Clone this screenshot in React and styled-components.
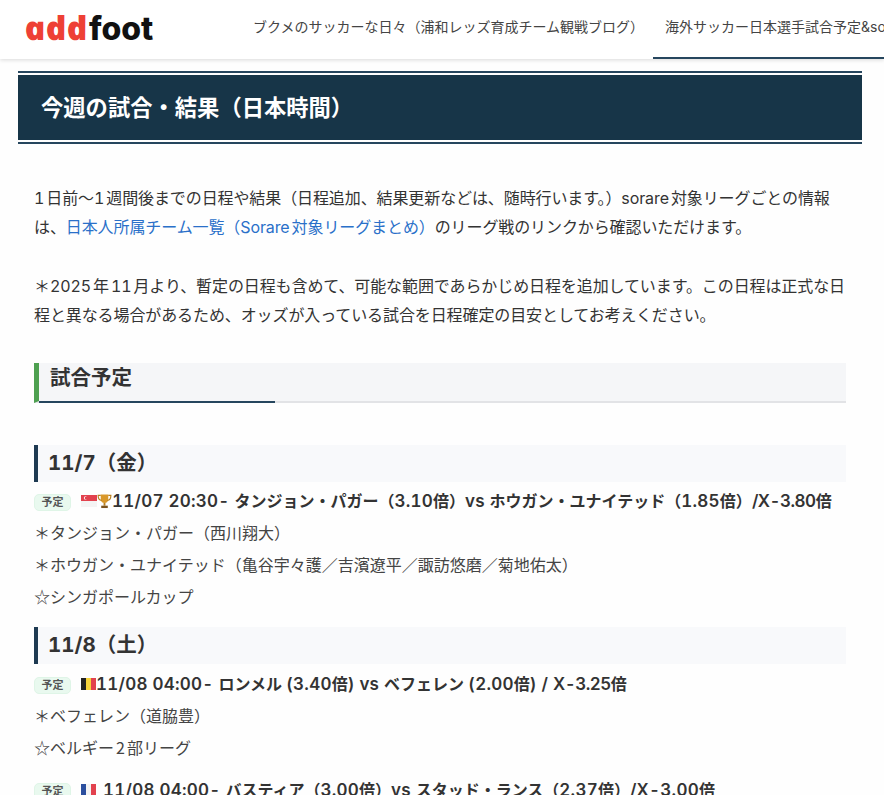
import React from 'react'
import styled, { createGlobalStyle } from 'styled-components'

const GlobalStyle = createGlobalStyle`
  html, body {
    margin: 0;
    padding: 0;
    height: 795px;
    overflow: hidden;
    background: #fefefe;
    color: #333;
    font-family: Inter, "Noto Sans CJK JP", sans-serif;
    font-variant-numeric: tabular-nums;
    text-autospace: normal;
  }
`

const Header = styled.header`
  display: flex;
  height: 59px;
  background: #fff;
  box-shadow: 0 1px 4px rgba(0, 0, 0, 0.15);
  overflow: hidden;
  position: relative;
`
const Logo = styled.div`
  flex: none;
  width: 253px;
  padding: 6px 0 0 24px;
  box-sizing: border-box;
  font-size: 33px;
  line-height: 44px;
  white-space: nowrap;
  color: #111;
`
const LogoRed = styled.span`
  display: inline-block;
  font-family: "Open Sans", sans-serif;
  font-style: italic;
  font-weight: 800;
  color: #ee4035;
  transform-origin: left center;
  transform: skewX(12deg) scaleX(1.05);
  margin-right: 5px;
`
const LogoDark = styled.span`
  font-family: Inter, sans-serif;
  font-weight: 800;
  font-size: 32px;
`
const NavItem = styled.a`
  flex: none;
  height: 59px;
  box-sizing: border-box;
  padding: 17px 0 0 ${props => (props.$active ? '12px' : '0')};
  margin-right: ${props => (props.$active ? '0' : '9px')};
  font-size: 14px;
  line-height: 20px;
  color: #444;
  font-variant-numeric: normal;
  border-bottom: 2px solid ${props => (props.$active ? '#26465e' : 'transparent')};
`
const Main = styled.main`
  padding: 12px 22px 0 18px;
`
const Title = styled.div`
  margin: 0;
  padding: 2px 0;
  border-top: 2px solid #26465e;
  border-bottom: 2px solid #26465e;
`
const TitleText = styled.h1`
  margin: 0;
  background: #173548;
  color: #fff;
  font-size: 22.3px;
  font-weight: 700;
  line-height: 65px;
  height: 65px;
  padding-left: 23px;
`
const Article = styled.article`
  padding: 40px 16px 0;
`
const Para = styled.p`
  margin: 0 0 30px;
  font-size: 16px;
  line-height: 29px;
  letter-spacing: -0.1px;
  color: #333;
  a {
    color: #2a70c9;
    text-decoration: none;
  }
`
const SectionHead = styled.h2`
  position: relative;
  margin: 33px 0 42px;
  height: 40px;
  box-sizing: border-box;
  padding-left: 11px;
  background: #f5f6f8;
  border-left: 5px solid #4ea050;
  border-bottom: 2px solid #e2e3e6;
  font-size: 20.5px;
  font-weight: 700;
  line-height: 30px;
  color: #333;
  &::after {
    content: "";
    position: absolute;
    left: 0;
    bottom: -2px;
    width: 236px;
    height: 2px;
    background: #26465e;
  }
`
const DayHead = styled.h3`
  margin: 0 0 3px;
  height: 37px;
  padding-left: 10px;
  background: #f8f9fb;
  border-left: 4px solid #1e3a52;
  font-size: 20.5px;
  font-weight: 700;
  line-height: 36px;
  color: #333;
`
const Match = styled.div`
  display: flex;
  align-items: center;
  height: ${props => (props.$tall ? '33px' : '32px')};
  font-size: 16px;
  font-weight: 700;
  white-space: nowrap;
  text-autospace: no-autospace;
  color: #333;
`
const MatchText = styled.span`
  flex: none;
  margin-top: -2px;
`
const Lat = styled.span`
  font-size: 17px;
  font-weight: 600;
  letter-spacing: ${props => (props.$tight ? '-0.5px' : '0.25px')};
`
const Badge = styled.span`
  flex: none;
  width: 35px;
  height: 15px;
  margin: 3px 10px 0 0;
  border: 1px solid #dff5e7;
  border-radius: 5px;
  background: #e9f9ef;
  color: #555;
  font-size: 11px;
  font-weight: 700;
  line-height: 15px;
  text-align: center;
`
const Note = styled.div`
  height: 32px;
  font-family: "Noto Sans CJK JP", sans-serif;
  font-size: 16px;
  line-height: 30px;
  color: #444;
`
const DayGroup = styled.section`
  margin-bottom: ${props => props.$gap || '14px'};
`
const Icon = styled.svg`
  flex: none;
  width: ${props => props.$w || 16}px;
  height: ${props => props.$h || 14}px;
  margin-right: ${props => props.$mr || 0}px;
`

const Singapore = () => (
  <Icon viewBox="0 0 16 12" $h={12}>
    <rect width="16" height="6" y="0" fill="#e2424e" />
    <rect width="16" height="6" y="6" fill="#f4f4f4" />
    <circle cx="4.5" cy="3" r="1.7" fill="#fff" />
    <circle cx="5.3" cy="3" r="1.6" fill="#e2424e" />
  </Icon>
)
const Trophy = () => (
  <Icon viewBox="0 0 16 16" $w={15} $h={16}>
    <path d="M4 1h8v5c0 2.5-1.6 4-4 4S4 8.500 4 6z" fill="#d9982a" />
    <path d="M4 2H1.200c0 3 1 5 3.800 5.500M12 2h2.800c0 3-1 5-3.800 5.500" fill="none" stroke="#b97f1e" strokeWidth="1.200" />
    <rect x="7" y="10" width="2" height="3" fill="#b97f1e" />
    <rect x="4.500" y="13" width="7" height="2.500" fill="#7a5320" />
  </Icon>
)
const TriFlag = ({ a, b, c, mr }) => (
  <Icon viewBox="0 0 15 12" $w={15} $h={12} $mr={mr}>
    <rect width="5" height="12" x="0" fill={a} />
    <rect width="5" height="12" x="5" fill={b} />
    <rect width="5" height="12" x="10" fill={c} />
  </Icon>
)

export default function App() {
  return (
    <>
      <GlobalStyle />
      <Header>
        <Logo><LogoRed>add</LogoRed><LogoDark>foot</LogoDark></Logo>
        <NavItem>ブクメのサッカーな日々（浦和レッズ育成チーム観戦ブログ）</NavItem>
        <NavItem $active>海外サッカー日本選手試合予定&amp;sorare</NavItem>
      </Header>
      <Main>
        <Title><TitleText>今週の試合・結果（日本時間）</TitleText></Title>
        <Article>
          <Para>
            1日前〜1週間後までの日程や結果（日程追加、結果更新などは、随時行います。）sorare対象リーグごとの情報は、<a>日本人所属チーム一覧（Sorare対象リーグまとめ）</a>のリーグ戦のリンクから確認いただけます。
          </Para>
          <Para>
            ＊2025年11月より、暫定の日程も含めて、可能な範囲であらかじめ日程を追加しています。この日程は正式な日程と異なる場合があるため、オッズが入っている試合を日程確定の目安としてお考えください。
          </Para>
          <SectionHead>試合予定</SectionHead>
          <DayGroup>
            <DayHead>11/7（金）</DayHead>
            <Match>
              <Badge>予定</Badge><Singapore /><Trophy />
              <MatchText>
                <Lat>11/07 20:30- </Lat>タンジョン・パガー（<Lat>3.10</Lat>倍）<Lat>vs </Lat>ホウガン・ユナイテッド（<Lat>1.85</Lat>倍）<Lat $tight>/X-3.80</Lat>倍
              </MatchText>
            </Match>
            <Note>＊タンジョン・パガー（西川翔大）</Note>
            <Note>＊ホウガン・ユナイテッド（亀谷宇々護／吉濱遼平／諏訪悠磨／菊地佑太）</Note>
            <Note>☆シンガポールカップ</Note>
          </DayGroup>
          <DayGroup $gap="10px">
            <DayHead>11/8（土）</DayHead>
            <Match $tall>
              <Badge>予定</Badge><TriFlag a="#222" b="#f5d33c" c="#e2424e" />
              <MatchText>
                <Lat>11/08 04:00- </Lat>ロンメル <Lat>(3.40</Lat>倍<Lat>) vs </Lat>ベフェレン <Lat>(2.00</Lat>倍<Lat>) / </Lat><Lat $tight>X-3.25</Lat>倍
              </MatchText>
            </Match>
            <Note>＊ベフェレン（道脇豊）</Note>
            <Note>☆ベルギー2部リーグ</Note>
          </DayGroup>
          <Match>
            <Badge>予定</Badge><TriFlag a="#2c4f9e" b="#f4f4f4" c="#e2424e" mr={7} />
            <MatchText>
              <Lat>11/08 04:00- </Lat>バスティア（<Lat>3.00</Lat>倍）<Lat>vs </Lat>スタッド・ランス（<Lat>2.37</Lat>倍）<Lat>/X-3.00</Lat>倍
            </MatchText>
          </Match>
        </Article>
      </Main>
    </>
  )
}
